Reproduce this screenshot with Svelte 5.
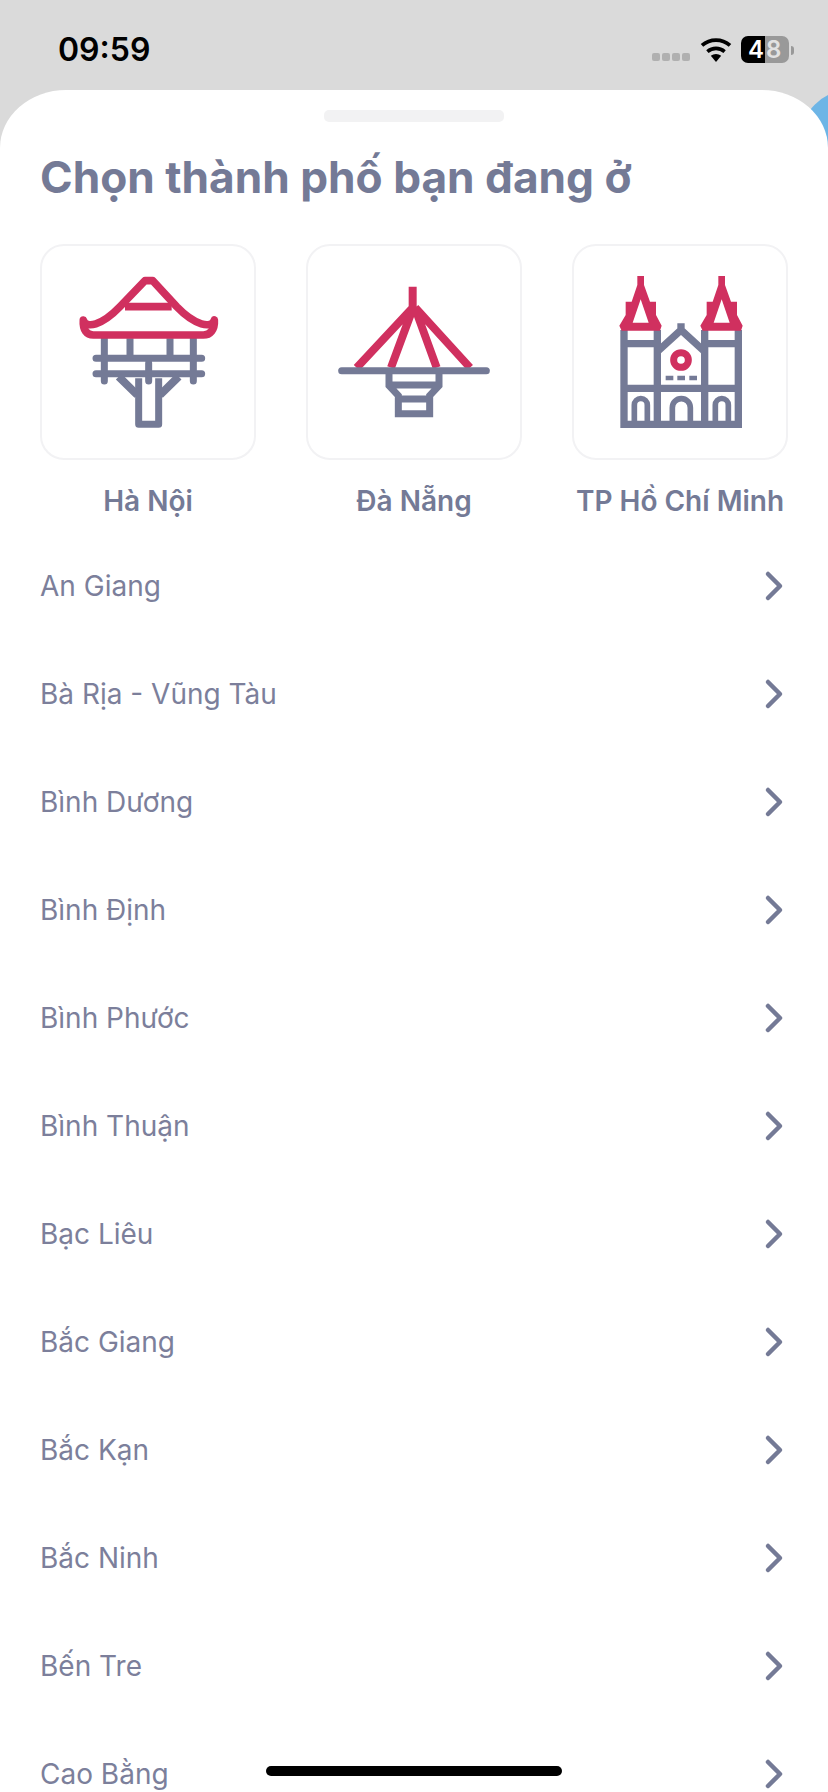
<script lang="ts">
  const provinces = [
    "An Giang",
    "Bà Rịa - Vũng Tàu",
    "Bình Dương",
    "Bình Định",
    "Bình Phước",
    "Bình Thuận",
    "Bạc Liêu",
    "Bắc Giang",
    "Bắc Kạn",
    "Bắc Ninh",
    "Bến Tre",
    "Cao Bằng",
  ];
  const spires = [0, 243];
  const arches = [
    "M223 558V510a18 18 0 0 1 39 0V558",
    "M337 558V518a27 27 0 0 1 54 0V558",
    "M466 558V510a18 18 0 0 1 39 0V558",
  ];
</script>

<div class="phone">
  <div class="blob"></div>

  <header class="status">
    <span class="time">09:59</span>
    <div class="status-right">
      <div class="signal"><i></i><i></i><i></i><i></i></div>
      <svg class="wifi" viewBox="0 0 32 24" aria-hidden="true">
        <path d="M16 24 10.8 17.8a8 8 0 0 1 10.4 0Z" fill="#000" />
        <path d="M7.4 13.6a13.2 13.2 0 0 1 17.2 0" fill="none" stroke="#000" stroke-width="3.6" />
        <path d="M2 7.4a21.5 21.5 0 0 1 28 0" fill="none" stroke="#000" stroke-width="3.8" />
      </svg>
      <div class="battery">
        <span class="d1">4</span><span class="d2">8</span>
      </div>
      <span class="nub"></span>
    </div>
  </header>

  <main class="sheet">
    <div class="handle"></div>
    <h1>Chọn thành phố bạn đang ở</h1>

    <div class="cities">
      <div class="city">
        <div class="card">
          <svg viewBox="36 33 636 636" aria-hidden="true">
            <g fill="none" stroke="#747a96" stroke-width="21">
              <path d="M223 310V438M490 310V438M356 385V438M198 370H515M198 416H515" stroke-linecap="round" />
              <path d="M300 310V370M420 310V370" />
              <path d="M326 430V568H386V430" stroke-linejoin="round" />
              <path d="M266 425 322 480M446 425 390 480" stroke-width="24" />
            </g>
            <g fill="none" stroke="#d0305f" stroke-width="23" stroke-linejoin="round">
              <path d="M160 255C168 282 215 272 270 215L345 137H368L440 215C495 272 545 282 553 255C555 285 540 300 520 300H190C170 300 158 285 160 255Z" />
              <path d="M285 215H425" />
            </g>
          </svg>
        </div>
        <span class="name">Hà Nội</span>
      </div>

      <div class="city">
        <div class="card">
          <svg viewBox="39 33 636 636" aria-hidden="true">
            <g fill="none" stroke="#d0305f" stroke-width="24">
              <path d="M353 155V222M353 218 185 398M353 222 288 398M361 222 425 398M361 218 525 398" />
            </g>
            <g fill="none" stroke="#747a96" stroke-width="21">
              <path d="M140 407H574" stroke-linecap="round" />
              <path d="M282 415V452L310 482V536H404V482L432 452V415M282 450H432M305 492H409" />
            </g>
          </svg>
        </div>
        <span class="name">Đà Nẵng</span>
      </div>

      <div class="city">
        <div class="card">
          <svg viewBox="42 33 636 636" aria-hidden="true">
            <g fill="none" stroke="#747a96" stroke-width="22">
              <path d="M192 285V568M292 285V568M434 285V568M535 285V568M192 326H292M434 326H535M192 460H535M181 568H546" />
              <path d="M292 350 363 285 434 350M363 265V285" />
            </g>
            <g fill="none" stroke="#747a96" stroke-width="17">
              {#each arches as d}
                <path {d} />
              {/each}
            </g>
            <path d="M317 422h23v14h-23zM352 422h23v14h-23zM388 422h23v14h-23z" fill="#747a96" />
            <circle cx="363" cy="375" r="22" fill="none" stroke="#d0305f" stroke-width="21" />
            {#each spires as dx}
              <path
                transform="translate({dx} 0)"
                fill="#d0305f"
                fill-rule="evenodd"
                d="M232 123H252V150L270 200H288V240L305 272 300 287H185L178 272 197 240V200H215L232 150ZM242 193 218 263H266Z"
              />
            {/each}
          </svg>
        </div>
        <span class="name">TP Hồ Chí Minh</span>
      </div>
    </div>

    <ul class="list">
      {#each provinces as p}
        <li>
          <span>{p}</span>
          <svg class="chev" viewBox="0 0 20 32" aria-hidden="true">
            <path d="M4 4 16 16 4 28" fill="none" stroke="#747a96" stroke-width="4.5" stroke-linecap="round" stroke-linejoin="round" />
          </svg>
        </li>
      {/each}
    </ul>
  </main>

  <div class="home"></div>
</div>

<style>
  :global(body) {
    margin: 0;
    background: #dadada;
  }
  .phone {
    position: relative;
    width: 828px;
    height: 1792px;
    overflow: hidden;
    background: #dadada;
    font-family: Inter, "Noto Sans", sans-serif;
  }
  .blob {
    position: absolute;
    left: 800px;
    top: 90px;
    width: 100px;
    height: 100px;
    border-radius: 50%;
    background: #6db5e6;
  }
  .status {
    position: relative;
    height: 90px;
    box-sizing: border-box;
    display: flex;
    align-items: flex-start;
    justify-content: space-between;
    padding: 30px 34px 0 58px;
  }
  .time {
    font-size: 32px;
    font-weight: 600;
    line-height: 40px;
    color: #000;
  }
  .status-right {
    display: flex;
    align-items: center;
    height: 40px;
  }
  .signal {
    display: flex;
    gap: 2px;
    margin-top: 14px;
    margin-right: 10px;
  }
  .signal i {
    width: 8px;
    height: 8px;
    border-radius: 2px;
    background: #b0b0b0;
  }
  .wifi {
    width: 32px;
    height: 24px;
    margin-right: 9px;
    margin-top: -1px;
  }
  .battery {
    display: flex;
    height: 27px;
    font-size: 24px;
    font-weight: 600;
    line-height: 27px;
    margin-top: -1px;
  }
  .battery span {
    display: block;
    height: 27px;
    width: 24px;
    box-sizing: border-box;
  }
  .d1 {
    background: #000;
    color: #fff;
    border-radius: 7px 0 0 7px;
    padding-left: 7px;
  }
  .d2 {
    background: #999;
    color: #e2e2e2;
    border-radius: 0 7px 7px 0;
    padding-left: 1px;
  }
  .nub {
    width: 3px;
    height: 9px;
    margin-left: 2px;
    border-radius: 0 3px 3px 0;
    background: #999;
  }
  .sheet {
    position: relative;
    background: #fff;
    border-radius: 66px 66px 0 0 / 58px 58px 0 0;
    height: 1702px;
    padding-top: 20px;
    box-sizing: border-box;
  }
  .handle {
    width: 180px;
    height: 12px;
    margin: 0 auto;
    border-radius: 5px;
    background: #f2f2f3;
  }
  h1 {
    margin: 30px 0 0 40px;
    font-size: 44.2px;
    font-weight: 700;
    line-height: 50px;
    color: #747a96;
    white-space: nowrap;
  }
  .cities {
    display: flex;
    gap: 50px;
    margin: 42px 0 0 40px;
  }
  .city {
    width: 216px;
    display: flex;
    flex-direction: column;
    align-items: center;
  }
  .card {
    width: 216px;
    height: 216px;
    box-sizing: border-box;
    border: 2px solid #f2f2f4;
    border-radius: 24px;
  }
  .card svg {
    display: block;
    width: 212px;
    height: 212px;
  }
  .name {
    margin-top: 23px;
    font-size: 28px;
    font-weight: 600;
    line-height: 36px;
    color: #747a96;
    white-space: nowrap;
  }
  .list {
    list-style: none;
    margin: 13px 0 0;
    padding: 0 40px;
  }
  .list li {
    height: 108px;
    display: flex;
    align-items: center;
    justify-content: space-between;
    font-size: 28px;
    color: #7c7f9b;
  }
  .chev {
    width: 20px;
    height: 32px;
    margin-right: 4px;
  }
  .home {
    position: absolute;
    left: 266px;
    top: 1766px;
    width: 296px;
    height: 10px;
    border-radius: 5px;
    background: #000;
  }
</style>
